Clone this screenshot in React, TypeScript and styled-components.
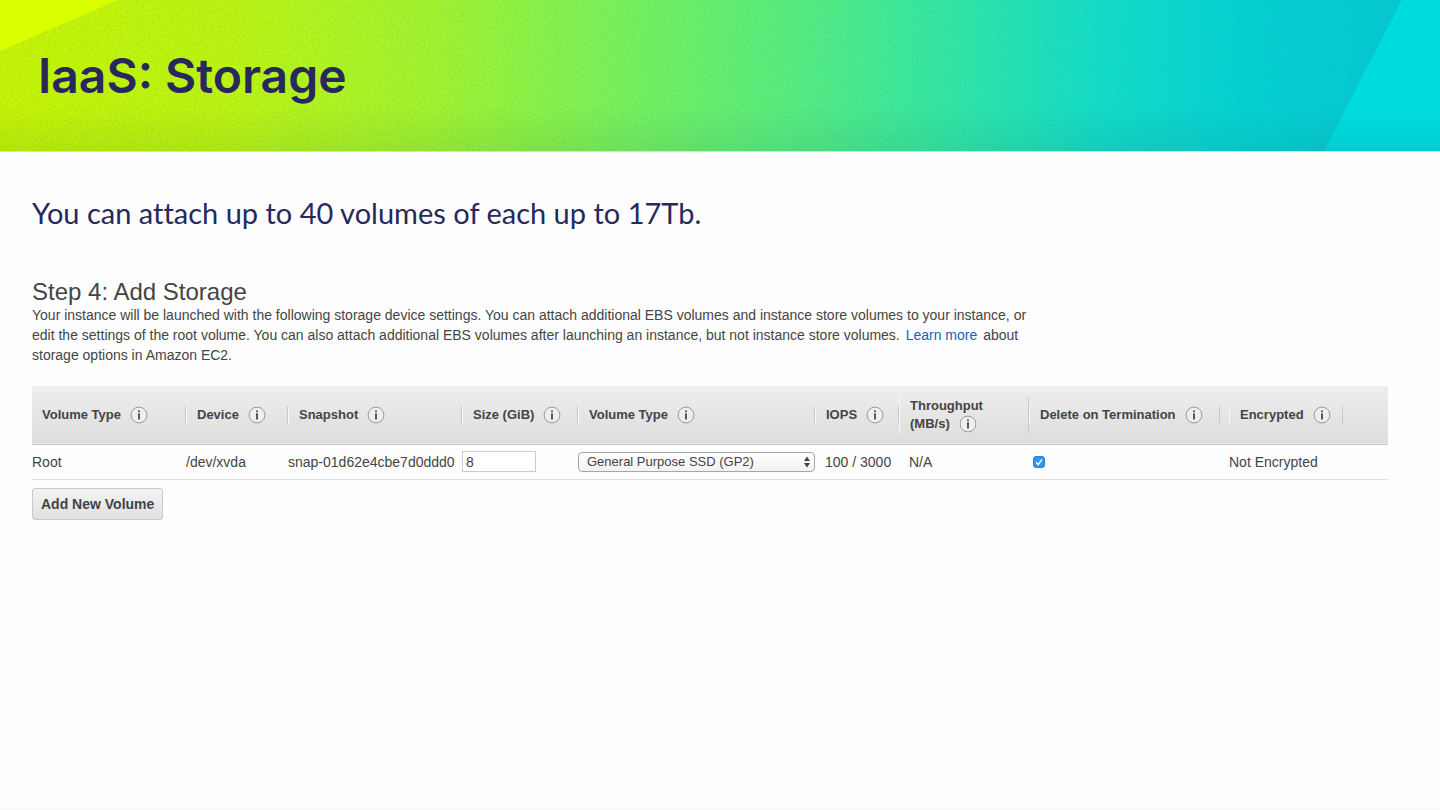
import React from "react";
import styled, { createGlobalStyle } from "styled-components";

const GlobalStyle = createGlobalStyle`
  *, *::before, *::after { box-sizing: border-box; }
  body { margin: 0; background: #fefefe; }
`;

const uiFont = `"Liberation Sans", Arial, sans-serif`;

const Slide = styled.main`
  min-height: 100vh;
  background: #fefefe;
  border-bottom: 2px solid #f9f9f9;
  font-family: ${uiFont};
  font-size: 14px;
  color: #444;
`;

const Banner = styled.header`
  position: relative;
  height: 152px;
  padding: 46px 38px 0;
  overflow: hidden;
  border-bottom: 1px solid #b4f0d0;
  background:
    linear-gradient(180deg, rgba(0, 60, 60, 0) 70%, rgba(0, 60, 60, 0.08) 100%),
    linear-gradient(
      91deg,
      #c9f700 0%,
      #bff70e 16%,
      #a4f62c 30%,
      #72f460 45%,
      #50ee86 57%,
      #2ce8aa 67%,
      #10decb 76%,
      #02d4d6 86%,
      #00cad5 96%
    );
`;

const Grain = styled.svg`
  position: absolute;
  inset: 0;
  width: 100%;
  height: 100%;
`;

const Corner = styled.div<{ $side: "left" | "right" }>`
  position: absolute;
  top: 0;
  ${({ $side }) =>
    $side === "left"
      ? `left: 0; width: 118px; height: 51px; background: #d9ff00;
         clip-path: polygon(0 0, 100% 0, 0 100%);`
      : `right: 0; width: 116px; height: 151px;
         background: linear-gradient(180deg, #00dbdf 70%, #00cfd3 100%);
         clip-path: polygon(67% 0, 100% 0, 100% 100%, 0 100%);`}
`;

const Title = styled.h1`
  position: relative;
  margin: 0;
  font: 600 48px/60px Inter, sans-serif;
  color: #28285c;
`;

const Content = styled.div`
  padding: 43px 52px 0 32px;
`;

const Lead = styled.p`
  margin: 0 0 47px;
  font: 400 29px/36px Lato, sans-serif;
  font-variant-ligatures: none;
  color: #28285c;
`;

const StepTitle = styled.h2`
  margin: 0;
  font-size: 24px;
  line-height: 27px;
  font-weight: 400;
`;

const Intro = styled.p`
  max-width: 1004px;
  margin: 0 0 21px;
  line-height: 20px;
`;

const Link = styled.a`
  margin: 0 2px;
  color: #1166bb;
  text-decoration: none;
`;

const Table = styled.table`
  width: 100%;
  table-layout: fixed;
  border-collapse: collapse;
`;

const HeadRow = styled.tr`
  height: 58px;
  background: linear-gradient(180deg, #eeeeee, #dddddd);
  border-bottom: 1px solid #c4c4c4;
`;

const HeadCell = styled.th`
  padding: 1px 0 0;
  font-size: 13px;
  text-align: left;
  vertical-align: middle;
  &:last-child { padding-right: 45px; }
`;

const HeadLabel = styled.div<{ $first?: boolean; $gap?: boolean }>`
  padding-left: 10px;
  margin-right: ${({ $gap }) => ($gap ? 9 : 0)}px;
  border-left: ${({ $first }) => ($first ? 0 : 1)}px solid #f8f8f8;
  border-right: 1px solid #c8c8c8;
  line-height: 18px;
  white-space: nowrap;
`;

const InfoIcon = styled.svg`
  width: 18px;
  height: 18px;
  margin-left: 9px;
  vertical-align: top;
`;

const Row = styled.tr`
  height: 35px;
  border-bottom: 1px solid #dcdfdd;
`;

const Cell = styled.td<{ $pad?: number }>`
  padding: 0 0 0 ${({ $pad = 0 }) => $pad}px;
  vertical-align: middle;
  white-space: nowrap;
`;

const SizeInput = styled.input`
  display: block;
  width: 74px;
  height: 21px;
  padding: 0 3px;
  border: 1px solid #ccc;
  border-radius: 0;
  background: #fff;
  font: 14px ${uiFont};
  color: #444;
`;

const SelectWrap = styled.div`
  position: relative;
`;

const TypeSelect = styled.select`
  display: block;
  appearance: none;
  width: 100%;
  height: 20px;
  padding: 0 24px 0 8px;
  border: 1px solid #a6a6a6;
  border-radius: 4px;
  background: linear-gradient(180deg, #fff, #f2f2f2);
  font: 13px ${uiFont};
  color: #444;
`;

const SelectArrows = styled.svg`
  position: absolute;
  top: 4px;
  right: 5px;
  width: 6px;
  height: 12px;
  pointer-events: none;
`;

const CheckWrap = styled.div`
  position: relative;
  width: 12px;
  height: 12px;
`;

const Check = styled.input`
  display: block;
  appearance: none;
  width: 12px;
  height: 12px;
  margin: 0;
  border: 1px solid #2a85d8;
  border-radius: 3px;
  background: #fff;
  &:checked { background: #3296ee; }
  &:not(:checked) + svg { display: none; }
`;

const CheckMark = styled.svg`
  position: absolute;
  inset: 0;
  pointer-events: none;
`;

const AddButton = styled.button`
  height: 32px;
  margin-top: 8px;
  padding: 0 8px;
  border: 1px solid #c8c8c8;
  border-radius: 3px;
  background: linear-gradient(180deg, #f4f4f4, #e0e0e0);
  font: 700 14px ${uiFont};
  color: #444;
`;

const Info = () => (
  <InfoIcon viewBox="0 0 18 18" role="img" aria-label="Info">
    <circle cx="9" cy="9" r="7.9" fill="#efefef" stroke="#999" strokeWidth="1" />
    <rect x="8.1" y="4.4" width="1.8" height="1.7" fill="#4a4a4a" />
    <rect x="8.1" y="7.2" width="1.8" height="6.3" fill="#4a4a4a" />
  </InfoIcon>
);

const columns: { lines: string[]; width?: number; gap?: boolean }[] = [
  { lines: ["Volume Type"], width: 154 },
  { lines: ["Device"], width: 102 },
  { lines: ["Snapshot"], width: 174 },
  { lines: ["Size (GiB)"], width: 116 },
  { lines: ["Volume Type"], width: 237 },
  { lines: ["IOPS"], width: 84 },
  { lines: ["Throughput", "(MB/s)"], width: 130 },
  { lines: ["Delete on Termination"], width: 200, gap: true },
  { lines: ["Encrypted"] },
];

export default function App() {
  return (
    <>
      <GlobalStyle />
      <Slide>
        <Banner>
          <Grain aria-hidden="true">
            <filter id="grain">
              <feTurbulence type="fractalNoise" baseFrequency="0.5" numOctaves="2" seed="4" />
              <feColorMatrix values="0 0 0 0 0.1  0 0 0 0 0.3  0 0 0 0 0.2  0.8 0 0 0 -0.28" />
            </filter>
            <rect width="100%" height="100%" filter="url(#grain)" opacity="0.5" />
          </Grain>
          <Corner $side="left" />
          <Corner $side="right" />
          <Title>IaaS: Storage</Title>
        </Banner>
        <Content>
          <Lead>You can attach up to 40 volumes of each up to 17Tb.</Lead>
          <StepTitle>Step 4: Add Storage</StepTitle>
          <Intro>
            Your instance will be launched with the following storage device settings. You can
            attach additional EBS volumes and instance store volumes to your instance, or
            <br />
            edit the settings of the root volume. You can also attach additional EBS volumes after
            launching an instance, but not instance store volumes.{" "}
            <Link href="#learn-more">Learn more</Link> about
            <br />
            storage options in Amazon EC2.
          </Intro>
          <Table>
            <colgroup>
              {columns.map((c, i) => (
                <col key={i} width={c.width} />
              ))}
            </colgroup>
            <thead>
              <HeadRow>
                {columns.map((c, i) => (
                  <HeadCell key={i} scope="col">
                    <HeadLabel $first={i === 0} $gap={c.gap}>
                      {c.lines.map((line, n) => (
                        <React.Fragment key={line}>
                          {n > 0 && <br />}
                          {line}
                        </React.Fragment>
                      ))}
                      <Info />
                    </HeadLabel>
                  </HeadCell>
                ))}
              </HeadRow>
            </thead>
            <tbody>
              <Row>
                <Cell>Root</Cell>
                <Cell>/dev/xvda</Cell>
                <Cell>snap-01d62e4cbe7d0ddd0</Cell>
                <Cell>
                  <SizeInput aria-label="Size (GiB)" defaultValue="8" />
                </Cell>
                <Cell>
                  <SelectWrap>
                    <TypeSelect aria-label="Volume Type">
                      <option>General Purpose SSD (GP2)</option>
                    </TypeSelect>
                    <SelectArrows viewBox="0 0 6 12" aria-hidden="true">
                      <path d="M3 0.5 6 5H0ZM3 11.5 0 7H6Z" fill="#444" />
                    </SelectArrows>
                  </SelectWrap>
                </Cell>
                <Cell $pad={10}>100 / 3000</Cell>
                <Cell $pad={10}>N/A</Cell>
                <Cell $pad={4}>
                  <CheckWrap>
                    <Check type="checkbox" aria-label="Delete on Termination" defaultChecked />
                    <CheckMark viewBox="0 0 12 12" aria-hidden="true">
                      <path d="M3 6.3 5.2 8.6 9 3.4" fill="none" stroke="#fff" strokeWidth="1.5" />
                    </CheckMark>
                  </CheckWrap>
                </Cell>
                <Cell>Not Encrypted</Cell>
              </Row>
            </tbody>
          </Table>
          <AddButton type="button">Add New Volume</AddButton>
        </Content>
      </Slide>
    </>
  );
}
